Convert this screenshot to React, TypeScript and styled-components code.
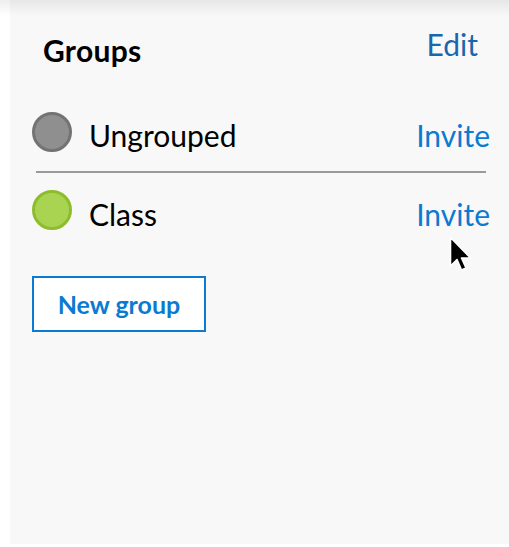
import React from 'react';
import styled, { createGlobalStyle } from 'styled-components';

const GlobalStyle = createGlobalStyle`
  html, body {
    margin: 0;
    padding: 0;
    background: #ffffff;
  }
  body {
    font-family: Lato, "Open Sans", sans-serif;
  }
`;

const Page = styled.div`
  position: relative;
  width: 509px;
  height: 547px;
  overflow: hidden;
  background: #ffffff;
`;

const TopShadow = styled.div`
  position: absolute;
  left: 0;
  right: 0;
  top: 0;
  height: 16px;
  background: linear-gradient(to bottom, rgba(0, 0, 0, 0.07), rgba(0, 0, 0, 0));
  pointer-events: none;
`;

const Panel = styled.aside`
  margin-left: 10px;
  height: 544px;
  background: #f8f8f8;
  box-sizing: border-box;
  padding: 0 19px 0 22px;
  display: flex;
  flex-direction: column;
`;

const Header = styled.div`
  display: flex;
  justify-content: space-between;
  align-items: flex-start;
  padding: 0 12px 0 11px;
  height: 92px;
`;

const Title = styled.h2`
  margin: 32px 0 0;
  font-size: 30px;
  line-height: 36px;
  font-weight: 700;
  letter-spacing: 0.3px;
  color: #000;
`;

const LinkButton = styled.a<{ $tone?: 'dark' | 'light' }>`
  font-size: 30px;
  line-height: 36px;
  color: ${(p) => (p.$tone === 'dark' ? '#1a66ad' : '#0b7ad1')};
  text-decoration: none;
  cursor: pointer;
`;

const EditLink = styled(LinkButton)`
  margin-top: 26px;
`;

const InviteLink = styled(LinkButton)`
  padding-top: 7px;
`;

const GroupList = styled.ul`
  list-style: none;
  margin: 0;
  padding: 0;
`;

const GroupRow = styled.li<{ $height: number }>`
  display: flex;
  align-items: center;
  height: ${(p) => p.$height}px;
`;

const Divider = styled.li`
  height: 2px;
  margin: 0 4px;
  background: #9a9a9a;
`;

const Dot = styled.span<{ $fill: string; $ring: string }>`
  width: 40px;
  height: 40px;
  box-sizing: border-box;
  border-radius: 50%;
  background: ${(p) => p.$fill};
  border: 3px solid ${(p) => p.$ring};
  flex: none;
`;

const GroupName = styled.span`
  flex: 1;
  margin-left: 17px;
  padding-top: 7px;
  font-size: 30px;
  line-height: 36px;
  color: #000;
`;

const NewGroupButton = styled.button`
  align-self: flex-start;
  margin-top: 29px;
  width: 174px;
  height: 56px;
  background: #ffffff;
  border: 2px solid #0b7ad1;
  color: #0b7ad1;
  font-family: Lato, "Open Sans", sans-serif;
  font-size: 25px;
  font-weight: 700;
  cursor: pointer;
`;

const Cursor = styled.svg`
  position: absolute;
  left: 448px;
  top: 236px;
  width: 26px;
  height: 38px;
`;

const groups = [
  { name: 'Ungrouped', fill: '#8f8f8f', ring: '#737373', height: 79 },
  { name: 'Class', fill: '#a9d452', ring: '#8dbd2c', height: 74 },
];

export default function App() {
  return (
    <Page>
      <GlobalStyle />
      <Panel>
        <Header>
          <Title>Groups</Title>
          <EditLink $tone="dark">Edit</EditLink>
        </Header>
        <GroupList>
          {groups.map((g, i) => (
            <React.Fragment key={g.name}>
              {i > 0 && <Divider />}
              <GroupRow $height={g.height}>
                <Dot $fill={g.fill} $ring={g.ring} />
                <GroupName>{g.name}</GroupName>
                <InviteLink>Invite</InviteLink>
              </GroupRow>
            </React.Fragment>
          ))}
        </GroupList>
        <NewGroupButton>New group</NewGroupButton>
      </Panel>
      <TopShadow />
      <Cursor viewBox="0 0 26 38">
        <path
          d="M2.5 1.5 L2.5 30 L9 23.5 L13.5 34 L18 32 L13.5 22 L22.5 22 Z"
          fill="#000"
          stroke="#fff"
          strokeWidth="1.6"
          strokeLinejoin="round"
        />
      </Cursor>
    </Page>
  );
}
